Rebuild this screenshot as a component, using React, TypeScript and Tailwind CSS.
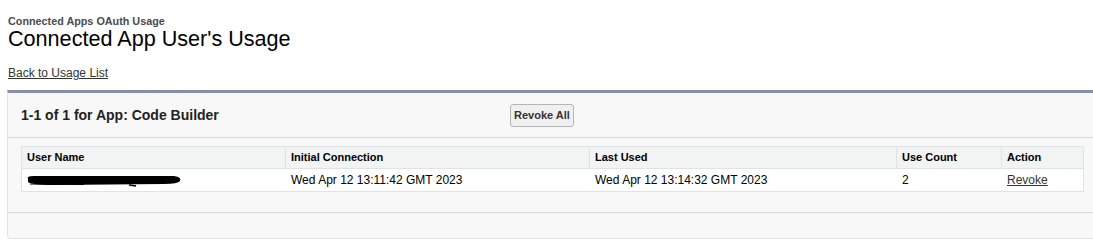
import React from "react";

export default function App() {
  const font = { fontFamily: '"Liberation Sans", Arial, sans-serif' };
  return (
    <div className="w-[1093px] h-[241px] bg-white overflow-hidden" style={font}>
      <div className="pl-[8px] pt-[15px]">
        <div className="text-[10.8px] font-bold text-[#4a4a56] leading-[12px]">Connected Apps OAuth Usage</div>
        <h1 className="text-[21.6px] text-black leading-[24px] mt-[0px]">Connected App User&apos;s Usage</h1>
        <div className="mt-[15px] text-[12px] leading-[14px]">
          <a className="underline text-[#333333]">Back to Usage List</a>
        </div>
      </div>
      <div className="ml-[7px] mt-[10px] w-[1100px] border-t-[3px] border-t-[#8a8fa8] border-x border-b border-x-[#e0e3e5] border-b-[#e0e3e5] rounded-b-[4px] bg-[#f8f8f8] h-[149px]">
        <div className="flex items-center h-[45px] border-b border-[#dbdbdb]">
          <div className="pl-[13px] w-[502px] text-[14px] font-bold text-[#222222]">1-1 of 1 for App: Code Builder</div>
          <button className="h-[23px] px-[3px] text-[11px] font-bold text-[#333333] bg-[#f0f0f0] border border-[#b5b5b5] rounded-[3px] leading-[20px]">Revoke All</button>
        </div>
        <div className="pt-[8px] pl-[13px] h-[75px] border-b border-[#dbdbdb]">
          <div className="w-[1063px] border border-[#e0e3e5] bg-white">
            <div className="flex h-[22px] bg-[#f2f3f3] border-b border-[#e0e3e5] text-[11px] font-bold text-black items-center">
              <div className="w-[263px] pl-[5px] h-full flex items-center">User Name</div>
              <div className="w-[304px] pl-[5px] h-full flex items-center border-l border-[#e0e3e5]">Initial Connection</div>
              <div className="w-[307px] pl-[5px] h-full flex items-center border-l border-[#e0e3e5]">Last Used</div>
              <div className="w-[105px] pl-[5px] h-full flex items-center border-l border-[#e0e3e5]">Use Count</div>
              <div className="flex-1 pl-[5px] h-full flex items-center border-l border-[#e0e3e5]">Action</div>
            </div>
            <div className="flex h-[22px] text-[12px] text-black items-center">
              <div className="w-[264px] pl-[2px] h-full flex items-center">
                <svg width="160" height="14" viewBox="0 0 160 14">
                  <path d="M4 6 Q2 3 10 3 L150 3 Q158 4 156 8 Q154 11 140 11 L30 12 Q8 12 4 9 Z" fill="#000" />
                  <path d="M6 11 L60 11.5" stroke="#000" strokeWidth="1.2" />
                  <path d="M105 12 L112 13" stroke="#000" strokeWidth="1.4" />
                </svg>
              </div>
              <div className="w-[304px] pl-[5px]">Wed Apr 12 13:11:42 GMT 2023</div>
              <div className="w-[307px] pl-[5px]">Wed Apr 12 13:14:32 GMT 2023</div>
              <div className="w-[105px] pl-[5px]">2</div>
              <div className="flex-1 pl-[5px]"><a className="underline text-[#333333]">Revoke</a></div>
            </div>
          </div>
        </div>
      </div>
    </div>
  );
}
